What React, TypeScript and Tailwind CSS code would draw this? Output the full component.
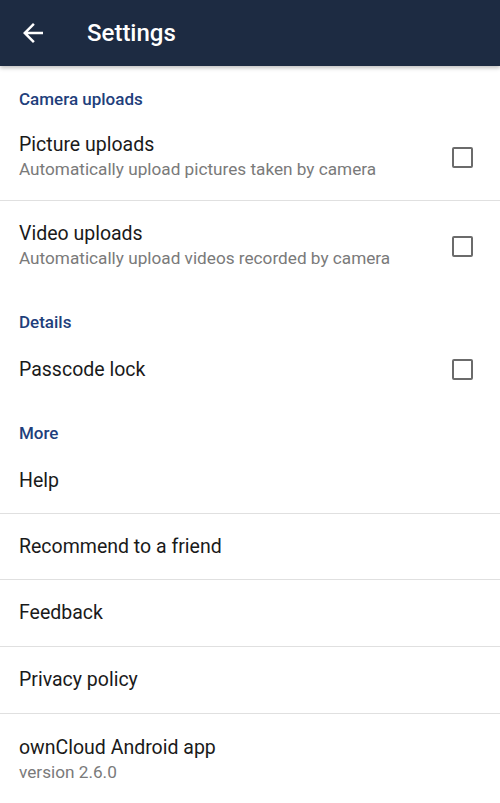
import React from "react";

const Checkbox = () => (
  <div className="mr-[27px] size-[21px] shrink-0 rounded-[2px] border-2 border-[#6b6b6b]" />
);

const Category = ({ title, h }: { title: string; h: string }) => (
  <div className={`flex items-end px-[19px] pb-[5px] ${h}`}>
    <span className="text-[17px] leading-5 font-medium text-[#1f3f7c]">{title}</span>
  </div>
);

const Row = ({
  title,
  subtitle,
  h,
  check,
  border,
}: {
  title: string;
  subtitle?: string;
  h: string;
  check?: boolean;
  border?: boolean;
}) => (
  <div className={`flex items-center justify-between ${h} ${border ? "border-b border-[#e0e0e0]" : ""}`}>
    <div className="flex flex-col pl-[19px]">
      <span className="text-[19.5px] leading-6 text-[#1a1a1a]">{title}</span>
      {subtitle && <span className="text-[17.2px] leading-6 text-[#7a7a7a]">{subtitle}</span>}
    </div>
    {check && <Checkbox />}
  </div>
);

export default function App() {
  return (
    <div className="flex h-[803px] w-[500px] flex-col overflow-hidden bg-white font-['Roboto',sans-serif]">
      <div className="relative z-10 flex h-[66px] shrink-0 items-center bg-[#1d2b42] shadow-[0_2px_4px_rgba(0,0,0,0.25)]">
        <svg className="ml-[18px]" width="30" height="30" viewBox="0 0 24 24" fill="white">
          <path d="M20 11H7.83l5.59-5.59L12 4l-8 8 8 8 1.41-1.41L7.83 13H20v-2z" />
        </svg>
        <span className="ml-[39px] text-[24px] font-medium text-white">Settings</span>
      </div>

      <Category title="Camera uploads" h="h-[48px]" />
      <Row
        title="Picture uploads"
        subtitle="Automatically upload pictures taken by camera"
        h="h-[87px]"
        check
        border
      />
      <Row
        title="Video uploads"
        subtitle="Automatically upload videos recorded by camera"
        h="h-[90px]"
        check
      />

      <Category title="Details" h="h-[46px]" />
      <Row title="Passcode lock" h="h-[65px]" check />

      <Category title="More" h="h-[46px]" />
      <Row title="Help" h="h-[66px]" border />
      <Row title="Recommend to a friend" h="h-[66px]" border />
      <Row title="Feedback" h="h-[67px]" border />
      <Row title="Privacy policy" h="h-[67px]" border />
      <div className="flex flex-col pt-[22px] pl-[19px]">
        <span className="text-[19.5px] leading-6 text-[#1a1a1a]">ownCloud Android app</span>
        <span className="text-[17.2px] leading-6 text-[#7a7a7a]">version 2.6.0</span>
      </div>
    </div>
  );
}
